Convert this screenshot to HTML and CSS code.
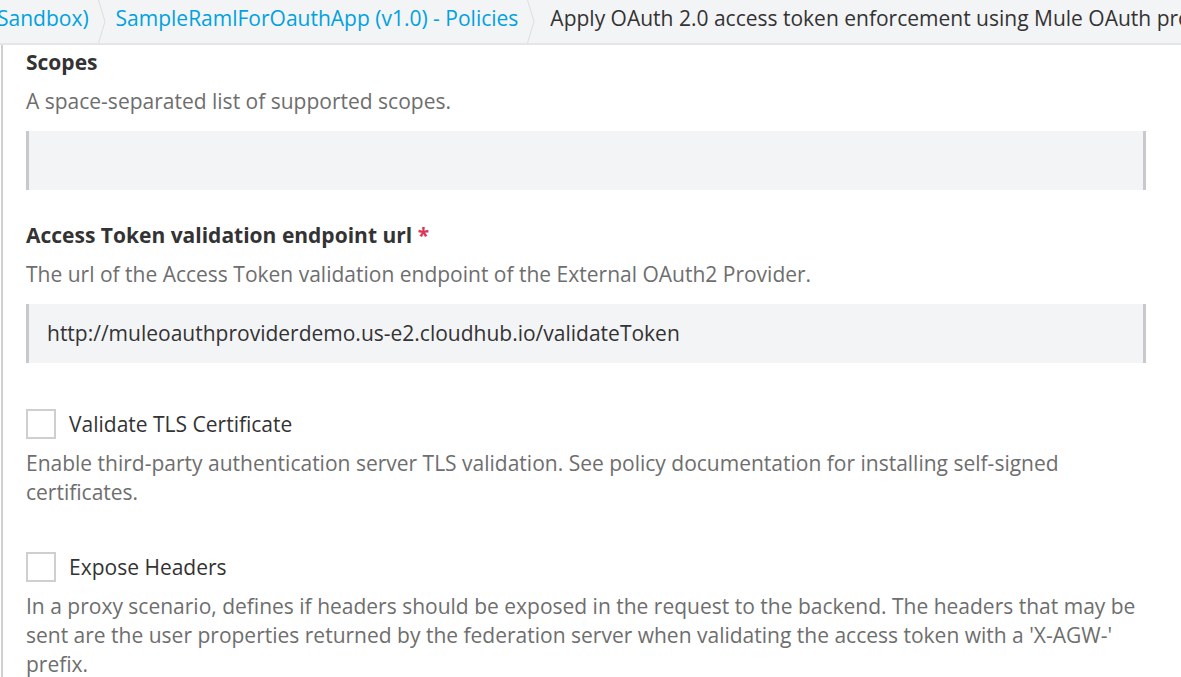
FILE: index.html
```html
<!DOCTYPE html>
<html>
  <head>
    <meta charset="utf-8" />
    <title>Apply OAuth 2.0 access token enforcement</title>
    <link rel="stylesheet" href="styles.css">
  </head>
  <body>

    <div class="crumbs">
      <a class="crumb crumb-first" href="#">Sandbox)</a>
      <svg class="chev" width="8" height="43" viewBox="0 0 8 43"><path d="M0.5 0 L7 21.5 L0.5 43" fill="none" stroke="#dcdde0" stroke-width="1"/></svg>
      <a class="crumb" href="#">SampleRamlForOauthApp (v1.0) - Policies</a>
      <svg class="chev" width="8" height="43" viewBox="0 0 8 43"><path d="M0.5 0 L7 21.5 L0.5 43" fill="none" stroke="#dcdde0" stroke-width="1"/></svg>
      <span class="crumb crumb-current">Apply OAuth 2.0 access token enforcement using Mule OAuth provider policy</span>
    </div>

    <div class="form">

      <div class="field">
        <div class="field-title">Scopes</div>
        <div class="field-desc">A space-separated list of supported scopes.</div>
        <div class="text-input"></div>
      </div>

      <div class="field">
        <div class="field-title">Access Token validation endpoint url <span class="req">*</span></div>
        <div class="field-desc">The url of the Access Token validation endpoint of the External OAuth2 Provider.</div>
        <div class="text-input">http://muleoauthproviderdemo.us-e2.cloudhub.io/validateToken</div>
      </div>

      <div class="check-field">
        <label class="check-row"><span class="box"></span>Validate TLS Certificate</label>
        <div class="field-desc">Enable third-party authentication server TLS validation. See policy documentation for installing self-signed certificates.</div>
      </div>

      <div class="check-field">
        <label class="check-row"><span class="box"></span>Expose Headers</label>
        <div class="field-desc">In a proxy scenario, defines if headers should be exposed in the request to the backend. The headers that may be sent are the user properties returned by the federation server when validating the access token with a 'X-AGW-' prefix.</div>
      </div>

    </div>

  </body>
</html>
```

FILE: styles.css
```css
body {
  margin: 0;
  font-family: "Open Sans", Arial, sans-serif;
  font-size: 21px;
  color: #333;
  background: #fff;
  overflow: hidden;
}
a { text-decoration: none; }

.crumbs {
  display: flex;
  align-items: flex-start;
  height: 43px;
  background-color: #f3f4f6;
  border-bottom: 2px solid #e4e5e8;
  white-space: nowrap;
  overflow: hidden;
}
.crumb {
  line-height: 37px;
  padding: 0 9px 0 10px;
}
.crumb-first { margin-left: -3px; padding-left: 0; }
a.crumb { color: #00a2df; }
.crumb-current { color: #333; padding-left: 15px; }
.chev { flex: none; display: block; }

.form {
  margin-left: 1px;
  border-left: 2px solid #d0d0d0;
  padding: 3px 0 0 23px;
  width: 1120px;
}

.field { margin-bottom: 31px; }
.field-title {
  font-weight: 700;
  line-height: 29px;
  margin-bottom: 10px;
}
.req { color: #d9365b; }
.field-desc {
  color: #6e6e6e;
  line-height: 29px;
  margin-bottom: 15px;
}
.text-input {
  box-sizing: border-box;
  height: 59px;
  line-height: 59px;
  background-color: #f3f4f6;
  border-left: 3px solid #c8c9cc;
  border-right: 3px solid #c8c9cc;
  padding-left: 18px;
  color: #333;
}

.check-field { margin-top: 46px; }
.check-field + .check-field { margin-top: 45px; }
.check-row {
  display: flex;
  align-items: center;
  height: 30px;
  margin-bottom: 10px;
}
.box {
  box-sizing: border-box;
  width: 30px;
  height: 30px;
  border: 2px solid #cfcfcf;
  background: #fff;
  margin-right: 13px;
}
```
